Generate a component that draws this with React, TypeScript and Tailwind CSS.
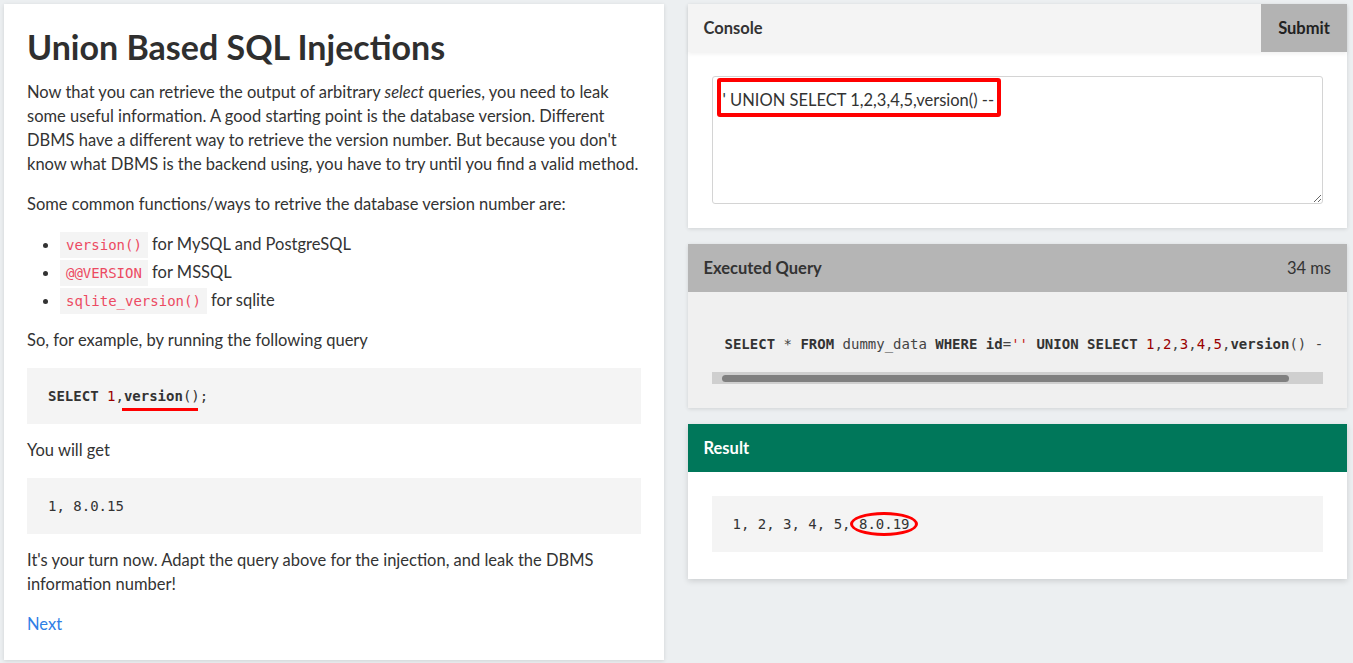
import React from 'react';

const sans = "font-['Lato','Open_Sans',sans-serif]";
const mono = "font-['DejaVu_Sans_Mono','Liberation_Mono',monospace]";

function InlineCode({ children }: { children: React.ReactNode }) {
  return (
    <code className={`${mono} text-[14px] leading-none bg-[#f4f4f4] text-[#ec4a62] px-[6px] py-[5px]`}>
      {children}
    </code>
  );
}

function Kw({ children }: { children: React.ReactNode }) {
  return <span className="font-bold text-[#333]">{children}</span>;
}

function Num({ children }: { children: React.ReactNode }) {
  return <span className="text-[#990000]">{children}</span>;
}

function Lesson() {
  return (
    <div className={`bg-white shadow-[0_1px_4px_rgba(0,0,0,0.12)] px-[23px] pt-[23px] h-[656px] text-[16.5px] leading-6 text-[#333] ${sans}`}>
      <h1 className="text-[34px] leading-[40px] font-bold text-[#2f2f2f] mb-[13px]">Union Based SQL Injections</h1>
      <p>
        Now that you can retrieve the output of arbitrary <em>select</em> queries, you need to leak some useful
        information. A good starting point is the database version. Different DBMS have a different way to retrieve
        the version number. But because you don't know what DBMS is the backend using, you have to try until you find
        a valid method.
      </p>
      <p className="mt-4">Some common functions/ways to retrive the database version number are:</p>
      <ul className="list-disc pl-[33px] mt-[14px] leading-[28px]">
        <li>
          <InlineCode>version()</InlineCode> for MySQL and PostgreSQL
        </li>
        <li>
          <InlineCode>@@VERSION</InlineCode> for MSSQL
        </li>
        <li>
          <InlineCode>sqlite_version()</InlineCode> for sqlite
        </li>
      </ul>
      <p className="mt-[14px]">So, for example, by running the following query</p>
      <pre className={`${mono} text-[14px] leading-6 bg-[#f4f4f4] mt-4 px-[21px] py-4 text-[#333]`}>
        <Kw>SELECT</Kw> <Num>1</Num>,
        <span className="relative">
          <Kw>version</Kw>()
          <span className="absolute left-[-2px] right-[2px] bottom-[-7px] h-[3px] bg-[#ff0000]" />
        </span>
        ;
      </pre>
      <p className="mt-[14px]">You will get</p>
      <pre className={`${mono} text-[14px] leading-6 bg-[#f4f4f4] mt-4 px-[21px] py-4 text-[#333]`}>1, 8.0.15</pre>
      <p className="mt-[14px]">
        It's your turn now. Adapt the query above for the injection, and leak the DBMS information number!
      </p>
      <a className="block mt-4 text-[#2f7fe6] w-fit">Next</a>
    </div>
  );
}

function Console() {
  return (
    <div className="bg-white shadow-[0_1px_4px_rgba(0,0,0,0.12)]">
      <div className="flex items-stretch h-12 bg-[#f4f4f4] shadow-[0_2px_4px_rgba(0,0,0,0.06)]">
        <div className="flex-1 flex items-center px-4 font-bold">Console</div>
        <button className="bg-[#b3b3b3] px-[16px] w-[86px] font-bold text-[#222]">Submit</button>
      </div>
      <div className="p-6">
        <div className="relative">
          <textarea
            readOnly
            value="' UNION SELECT 1,2,3,4,5,version() --"
            className={`block w-full h-[128px] border border-[#d4d4d4] rounded-[3px] px-[10px] py-[11px] leading-6 text-[16.5px] text-[#333] outline-none ${sans}`}
          />
          <div className="absolute left-[5px] top-[2px] w-[284px] h-[39px] border-4 border-[#ff0000] rounded-[3px] pointer-events-none" />
        </div>
      </div>
    </div>
  );
}

function Executed() {
  return (
    <div className="bg-[#f0f0f0] shadow-[0_1px_4px_rgba(0,0,0,0.12)]">
      <div className="flex items-center justify-between h-12 bg-[#b5b5b5] px-4">
        <span className="font-bold">Executed Query</span>
        <span>34 ms</span>
      </div>
      <div className="p-6">
        <pre className={`${mono} text-[14px] leading-6 pt-4 pl-[13px] whitespace-nowrap overflow-hidden text-[#444]`}>
          <Kw>SELECT</Kw> * <Kw>FROM</Kw> dummy_data <Kw>WHERE</Kw> <Kw>id</Kw>=<span className="text-[#c41a16]">''</span>{' '}
          <Kw>UNION</Kw> <Kw>SELECT</Kw> <Num>1</Num>,<Num>2</Num>,<Num>3</Num>,<Num>4</Num>,<Num>5</Num>,
          <Kw>version</Kw>() --
        </pre>
        <div className="mt-4 h-3 bg-[#cfcfcf] flex items-center px-[10px]">
          <div className="h-[7px] w-[567px] rounded-full bg-[#808080]" />
        </div>
      </div>
    </div>
  );
}

function Result() {
  return (
    <div className="bg-white shadow-[0_2px_6px_rgba(0,0,0,0.14)]">
      <div className="flex items-center h-12 bg-[#00775a] px-4 font-bold text-white">Result</div>
      <div className="px-6 pt-6 pb-[27px]">
        <pre className={`${mono} text-[14px] leading-6 bg-[#f4f4f4] px-[21px] py-4 text-[#333]`}>
          1, 2, 3, 4, 5,{' '}
          <span className="relative">
            8.0.19
            <span className="absolute left-[-9px] right-[-8px] top-[-4px] bottom-[-4px] border-[3px] border-[#ff0000] rounded-[50%]" />
          </span>
        </pre>
      </div>
    </div>
  );
}

export default function App() {
  return (
    <div className={`min-h-[663px] bg-[#eceff1] pl-1 pr-[6px] pt-1 grid grid-cols-2 gap-6 items-start text-[16.5px] text-[#333] ${sans}`}>
      <Lesson />
      <div className="flex flex-col gap-4">
        <Console />
        <Executed />
        <Result />
      </div>
    </div>
  );
}
